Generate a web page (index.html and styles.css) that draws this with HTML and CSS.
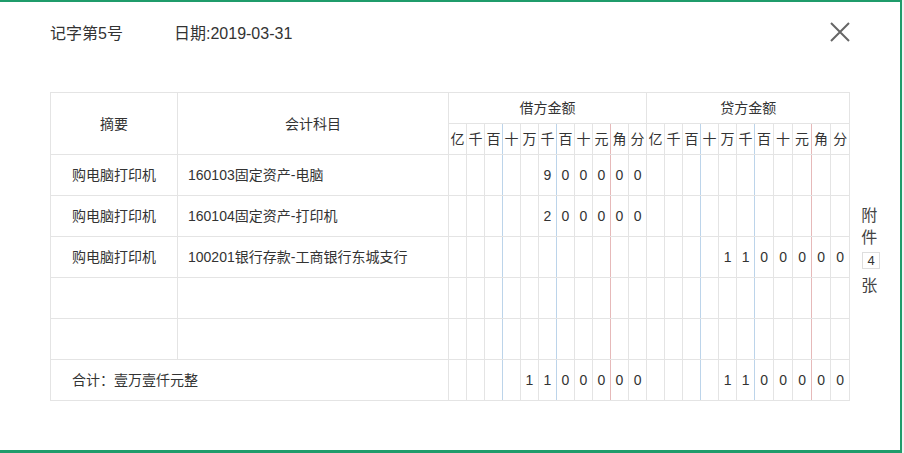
FILE: index.html
```html
<!DOCTYPE html>
<html lang="zh-CN">
<head>
<meta charset="utf-8">
<title>记字第5号</title>
<link rel="stylesheet" href="styles.css">
</head>
<body>
<div class="dialog">
  <div class="head">
    <span class="voucher-no">记字第5号</span>
    <span class="voucher-date">日期:2019-03-31</span>
    <button class="close" aria-label="关闭">
      <svg width="20" height="20" viewBox="0 0 20 20"><path d="M1 1 L19 19 M19 1 L1 19" stroke="#666" stroke-width="2" fill="none"/></svg>
    </button>
  </div>
  <div class="content">
    <table class="voucher">
      <colgroup>
        <col class="c-sum"><col class="c-acct">
        <col class="c18"><col class="c18"><col class="c18"><col class="c18"><col class="c18"><col class="c18"><col class="c18"><col class="c18"><col class="c18"><col class="c18"><col class="c18">
        <col class="c18"><col class="c18"><col class="c18"><col class="c18"><col class="c18"><col class="c18"><col class="c19"><col class="c19"><col class="c19"><col class="c19"><col class="c19">
      </colgroup>
      <thead>
        <tr class="h1">
          <th rowspan="2">摘要</th>
          <th rowspan="2">会计科目</th>
          <th colspan="11">借方金额</th>
          <th colspan="11">贷方金额</th>
        </tr>
        <tr class="h2">
          <th>亿</th><th>千</th><th class="b">百</th><th>十</th><th>万</th><th class="b">千</th><th>百</th><th>十</th><th class="r">元</th><th>角</th><th>分</th>
          <th>亿</th><th>千</th><th class="b">百</th><th>十</th><th>万</th><th class="b">千</th><th>百</th><th>十</th><th class="r">元</th><th>角</th><th>分</th>
        </tr>
      </thead>
      <tbody>
        <tr>
          <td class="sum">购电脑打印机</td><td class="acct">160103固定资产-电脑</td>
          <td></td><td></td><td class="b"></td><td></td><td></td><td class="b">9</td><td>0</td><td>0</td><td class="r">0</td><td>0</td><td>0</td>
          <td></td><td></td><td class="b"></td><td></td><td></td><td class="b"></td><td></td><td></td><td class="r"></td><td></td><td></td>
        </tr>
        <tr>
          <td class="sum">购电脑打印机</td><td class="acct">160104固定资产-打印机</td>
          <td></td><td></td><td class="b"></td><td></td><td></td><td class="b">2</td><td>0</td><td>0</td><td class="r">0</td><td>0</td><td>0</td>
          <td></td><td></td><td class="b"></td><td></td><td></td><td class="b"></td><td></td><td></td><td class="r"></td><td></td><td></td>
        </tr>
        <tr>
          <td class="sum">购电脑打印机</td><td class="acct">100201银行存款-工商银行东城支行</td>
          <td></td><td></td><td class="b"></td><td></td><td></td><td class="b"></td><td></td><td></td><td class="r"></td><td></td><td></td>
          <td></td><td></td><td class="b"></td><td></td><td>1</td><td class="b">1</td><td>0</td><td>0</td><td class="r">0</td><td>0</td><td>0</td>
        </tr>
        <tr>
          <td class="sum"></td><td class="acct"></td>
          <td></td><td></td><td class="b"></td><td></td><td></td><td class="b"></td><td></td><td></td><td class="r"></td><td></td><td></td>
          <td></td><td></td><td class="b"></td><td></td><td></td><td class="b"></td><td></td><td></td><td class="r"></td><td></td><td></td>
        </tr>
        <tr>
          <td class="sum"></td><td class="acct"></td>
          <td></td><td></td><td class="b"></td><td></td><td></td><td class="b"></td><td></td><td></td><td class="r"></td><td></td><td></td>
          <td></td><td></td><td class="b"></td><td></td><td></td><td class="b"></td><td></td><td></td><td class="r"></td><td></td><td></td>
        </tr>
        <tr class="total">
          <td colspan="2" class="total-label">合计：壹万壹仟元整</td>
          <td></td><td></td><td class="b"></td><td></td><td>1</td><td class="b">1</td><td>0</td><td>0</td><td class="r">0</td><td>0</td><td>0</td>
          <td></td><td></td><td class="b"></td><td></td><td>1</td><td class="b">1</td><td>0</td><td>0</td><td class="r">0</td><td>0</td><td>0</td>
        </tr>
      </tbody>
    </table>
    <div class="attach">
      <span class="attach-ch">附</span>
      <span class="attach-ch">件</span>
      <span class="attach-num">4</span>
      <span class="attach-ch last">张</span>
    </div>
  </div>
</div>
</body>
</html>
```

FILE: styles.css
```css
html, body {
  margin: 0;
  padding: 0;
}
body {
  background: #f2f2f2;
  font-family: "Liberation Sans", "Noto Sans CJK SC", sans-serif;
  color: #333;
}
.dialog {
  box-sizing: border-box;
  width: 902px;
  height: 453px;
  background: #fff;
  border-top: 2px solid #1f9c6b;
  border-right: 2px solid #1f9c6b;
  border-bottom: 3px solid #1f9c6b;
}
.head {
  display: flex;
  align-items: center;
  height: 64px;
  padding: 0 50px;
  font-size: 16px;
  line-height: 20px;
  color: #333;
}
.voucher-no {
  width: 124px;
}
.close {
  margin-left: auto;
  align-self: flex-start;
  margin-top: 20px;
  padding: 0;
  width: 20px;
  height: 20px;
  border: 0;
  background: transparent;
  display: block;
}
.close svg {
  display: block;
}
.content {
  display: flex;
  margin-top: 26px;
  padding-left: 50px;
}
.voucher {
  border-collapse: collapse;
  table-layout: fixed;
  width: 800px;
  font-size: 14px;
  color: #333;
}
.c-sum { width: 127px; }
.c-acct { width: 271px; }
.c18 { width: 18px; }
.c19 { width: 19px; }
.voucher th,
.voucher td {
  border: 1px solid #e4e4e4;
  padding: 0;
  text-align: center;
  font-weight: normal;
  white-space: nowrap;
  overflow: hidden;
  line-height: 18px;
}
.voucher .h1 { height: 31px; }
.voucher .h2 { height: 31px; }
.voucher tbody tr { height: 41px; }
.voucher .b { border-right-color: #bcd4ea; }
.voucher .r { border-right-color: #e6b9b9; }
.voucher td.acct {
  text-align: left;
  padding-left: 10px;
}
.voucher td.total-label {
  text-align: left;
  padding-left: 21px;
}
.attach {
  display: flex;
  flex-direction: column;
  align-items: center;
  align-self: flex-start;
  margin-top: 113px;
  margin-left: 9px;
  width: 20px;
  font-size: 16px;
  color: #444;
}
.attach-ch {
  line-height: 22px;
}
.attach-num {
  box-sizing: border-box;
  width: 18px;
  height: 17px;
  margin-top: 3px;
  margin-left: 4px;
  border: 1px solid #dedede;
  font-size: 13px;
  line-height: 15px;
  text-align: center;
  color: #333;
}
.attach-ch.last {
  margin-top: 6px;
}
```
